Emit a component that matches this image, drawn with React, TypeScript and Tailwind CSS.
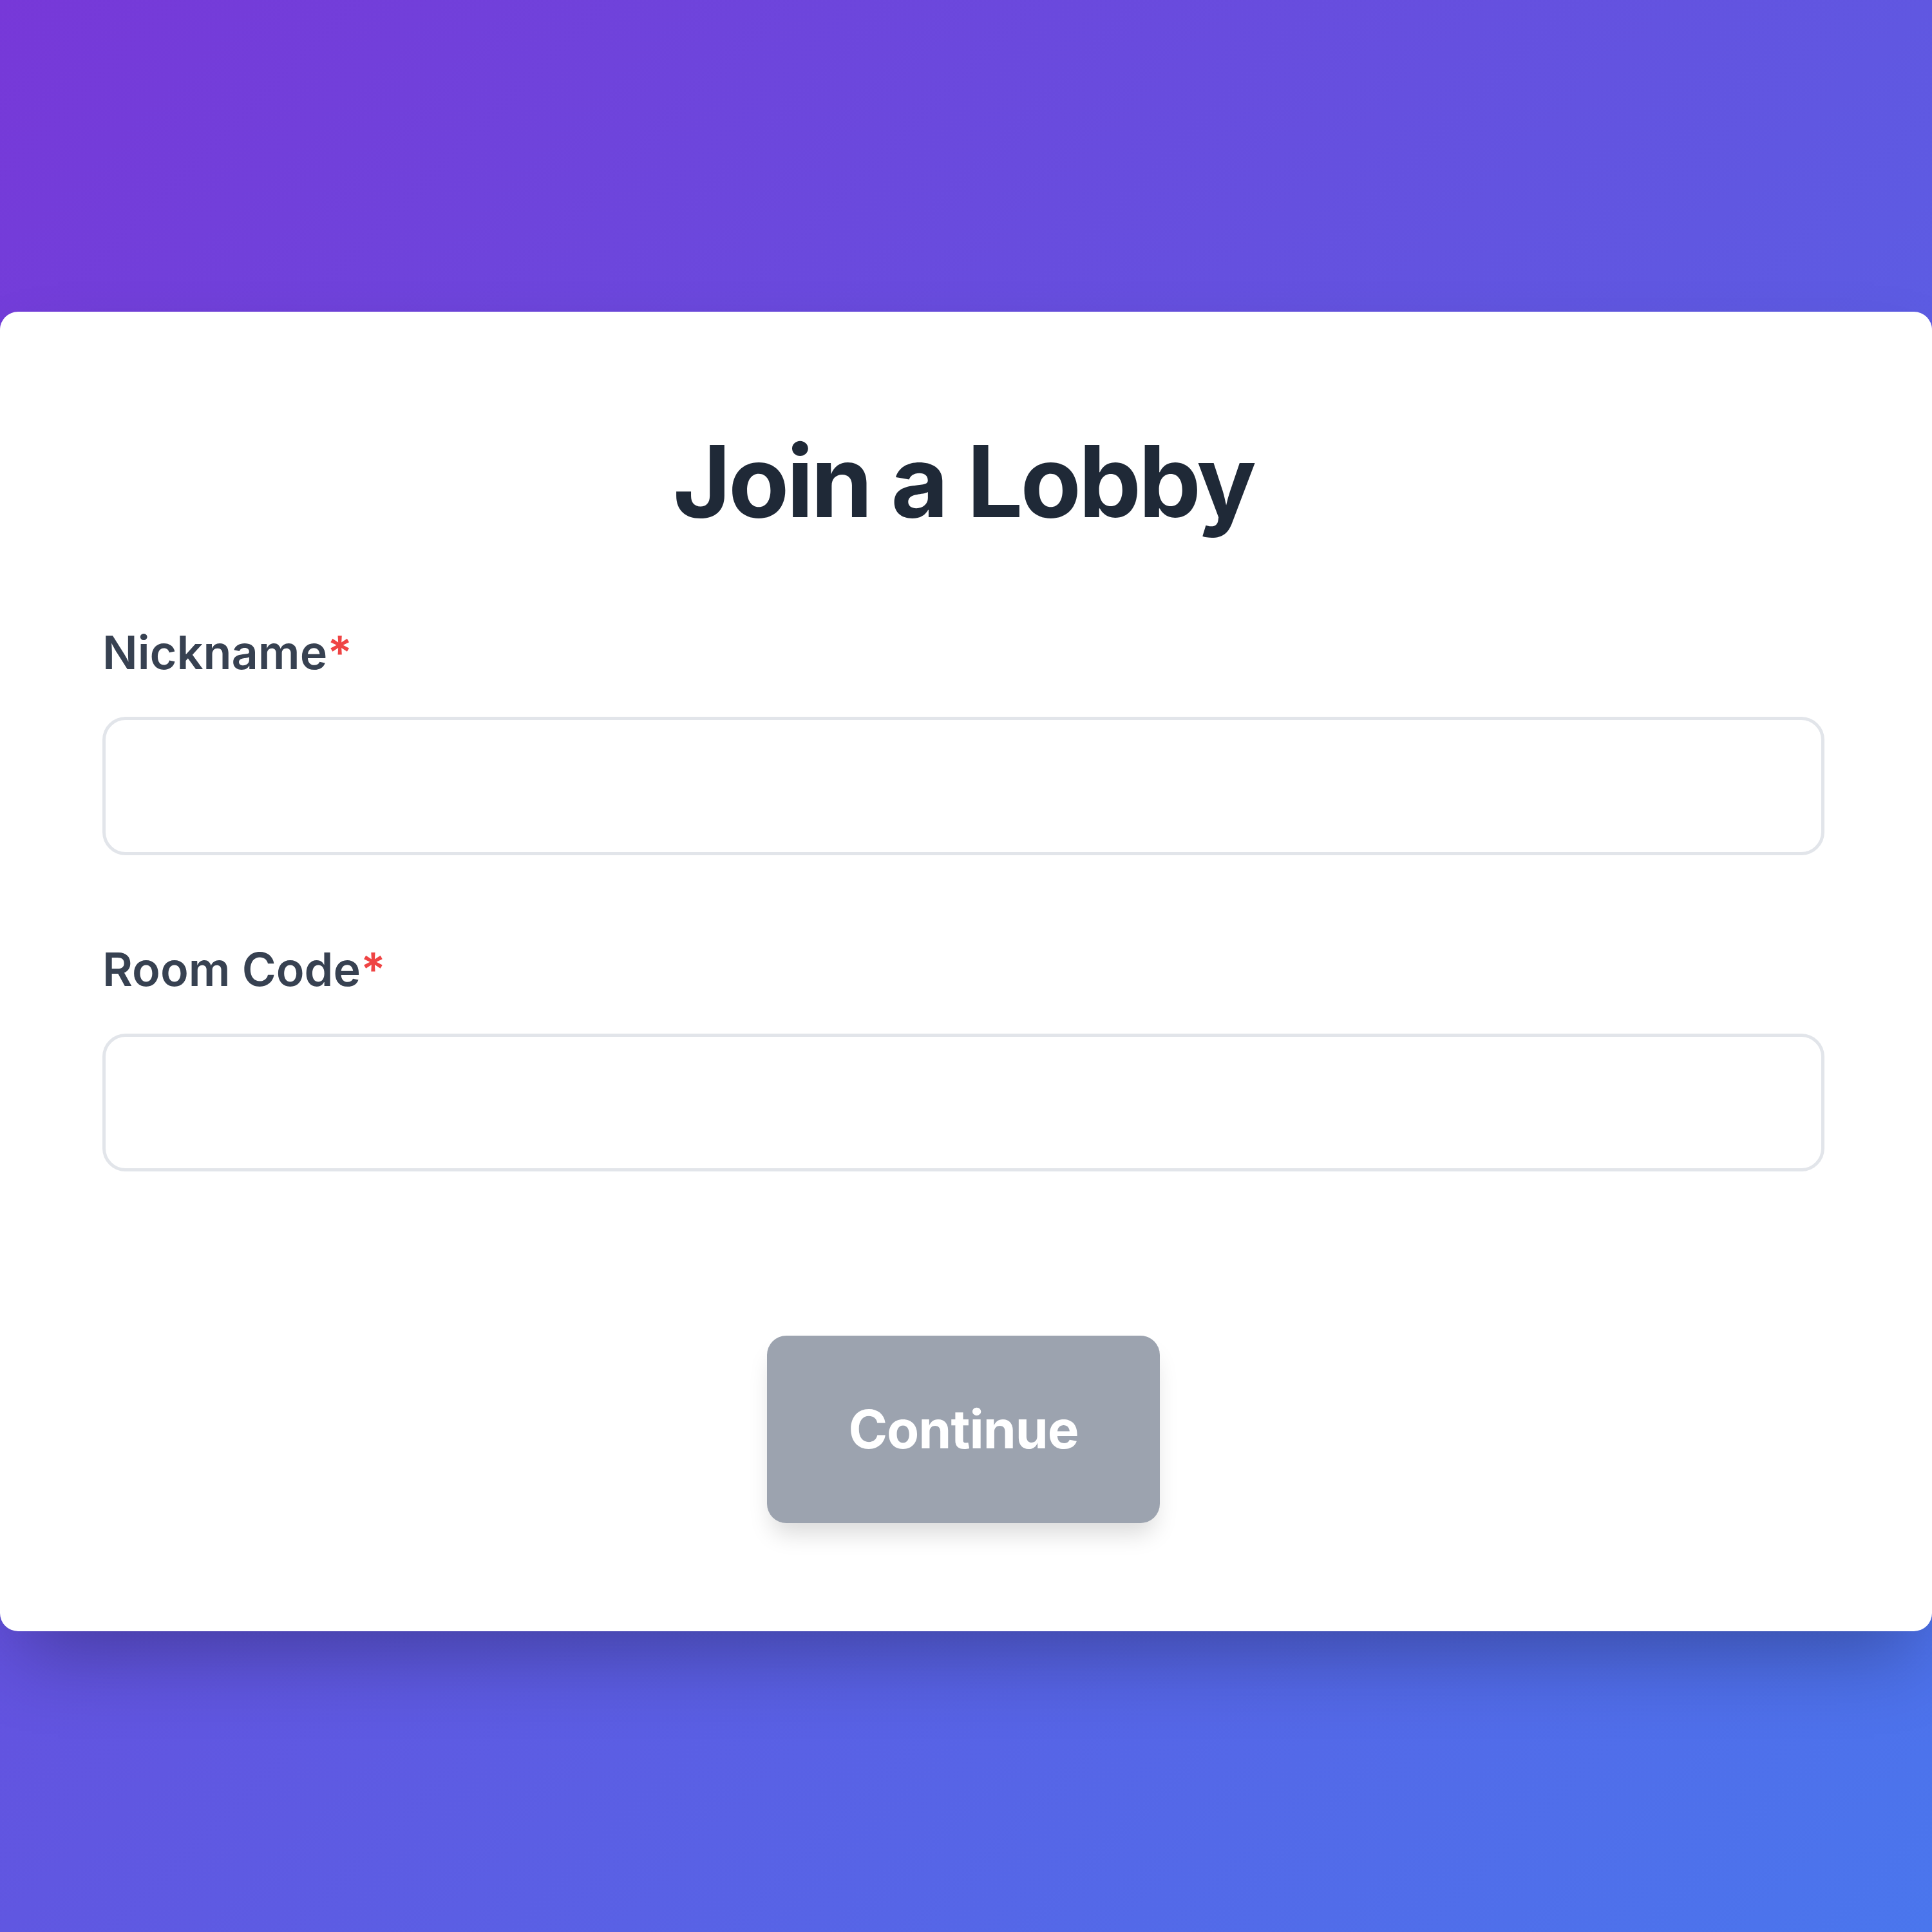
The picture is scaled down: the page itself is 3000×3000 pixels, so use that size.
import React from "react";

export default function App() {
  return (
    <div
      className="w-[3000px] h-[3000px] flex flex-col pt-[484px] bg-[linear-gradient(135deg,#7738d8_0%,#6057e1_50%,#4a76ed_100%)]"
      style={{ fontFamily: "Inter, 'Noto Sans', sans-serif" }}
    >
      <div className="w-full h-[2049px] bg-white rounded-[28px] shadow-[0_60px_120px_-30px_rgba(0,0,0,0.3)] pl-[159px] pr-[167px] pt-[186px] flex flex-col">
        <h1 className="text-center text-[154px] leading-[154px] font-bold text-[#1f2937] tracking-[-4px]">
          Join a Lobby
        </h1>

        <label className="mt-[153px] block text-[72px] leading-[72px] font-semibold text-[#374151]">
          Nickname<span className="text-[#ef4444]">*</span>
        </label>
        <input
          type="text"
          className="mt-[64px] block w-full h-[215px] rounded-[36px] border-[5px] border-[#e2e5ea] bg-white outline-none"
        />

        <label className="mt-[141px] block text-[72px] leading-[72px] font-semibold text-[#374151]">
          Room Code<span className="text-[#ef4444]">*</span>
        </label>
        <input
          type="text"
          className="mt-[64px] block w-full h-[214px] rounded-[36px] border-[5px] border-[#e2e5ea] bg-white outline-none"
        />

        <div className="mt-[255px] flex justify-center">
          <button
            type="button"
            disabled
            className="w-[610px] h-[291px] rounded-[30px] bg-[#9ca3af] text-white text-[82px] font-bold tracking-[-1px] shadow-[0_24px_36px_-8px_rgba(0,0,0,0.15)] flex items-center justify-center"
          >
            Continue
          </button>
        </div>
      </div>
    </div>
  );
}
